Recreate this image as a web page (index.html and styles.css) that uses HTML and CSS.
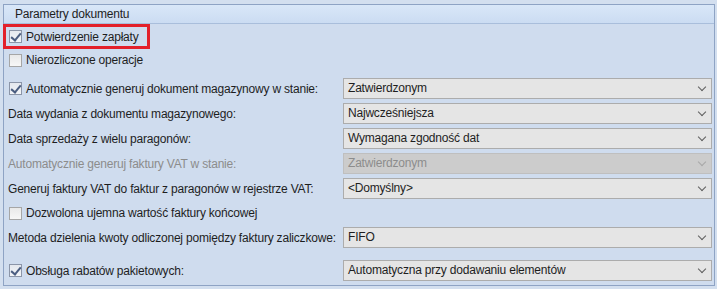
FILE: index.html
```html
<!DOCTYPE html>
<html lang="pl">
<head>
  <meta charset="UTF-8">
  <title>Parametry dokumentu</title>
  <link rel="stylesheet" href="styles.css">
</head>
<body>
  <div class="panel">
    <div class="panel-head">Parametry dokumentu</div>

    <div class="row r-first">
      <span class="chk on"></span><span class="lbl">Potwierdzenie zapłaty</span>
      <span class="mark"></span>
    </div>
    <div class="row r-short">
      <span class="chk"></span><span class="lbl">Nierozliczone operacje</span>
    </div>

    <div class="row r-gap">
      <div class="cell"><span class="chk on"></span><span class="lbl">Automatycznie generuj dokument magazynowy w stanie:</span></div>
      <div class="combo">Zatwierdzonym</div>
    </div>
    <div class="row">
      <div class="cell"><span class="lbl">Data wydania z dokumentu magazynowego:</span></div>
      <div class="combo">Najwcześniejsza</div>
    </div>
    <div class="row">
      <div class="cell"><span class="lbl">Data sprzedaży z wielu paragonów:</span></div>
      <div class="combo">Wymagana zgodność dat</div>
    </div>
    <div class="row off">
      <div class="cell"><span class="lbl">Automatycznie generuj faktury VAT w stanie:</span></div>
      <div class="combo">Zatwierdzonym</div>
    </div>
    <div class="row">
      <div class="cell"><span class="lbl">Generuj faktury VAT do faktur z paragonów w rejestrze VAT:</span></div>
      <div class="combo">&lt;Domyślny&gt;</div>
    </div>
    <div class="row r-mid">
      <span class="chk"></span><span class="lbl">Dozwolona ujemna wartość faktury końcowej</span>
    </div>
    <div class="row">
      <div class="cell"><span class="lbl">Metoda dzielenia kwoty odliczonej pomiędzy faktury zaliczkowe:</span></div>
      <div class="combo">FIFO</div>
    </div>
    <div class="row r-last">
      <div class="cell"><span class="chk on"></span><span class="lbl">Obsługa rabatów pakietowych:</span></div>
      <div class="combo">Automatyczna przy dodawaniu elementów</div>
    </div>
  </div>
</body>
</html>
```

FILE: styles.css
```css
:root { --tlo: #cfdcee; --ramka: #8ea3c4; --tekst: #1e1e1e; --szary: #8c8c8c; }
* { box-sizing: border-box; }
body { margin:0; background:#d3dfef; font-family:"Liberation Sans", Arial, sans-serif; font-size:12px;
  letter-spacing:-0.2px; color:var(--tekst); }
.panel { margin:4px 0 0 3px; width:712px; height:282px; background:var(--tlo);
  border:1px solid var(--ramka); }
.panel-head { height:19px; padding-left:11px; line-height:18px; border-bottom:1px solid #a9bedb;
  background:linear-gradient(#d9e7f8, #cbdcf2); }
.row { position:relative; display:flex; align-items:center; height:25px; padding:0 2px 0 4px; }
.r-short { height:22px; }
.r-gap { margin-top:5px; }
.r-mid { height:24px; }
.r-last { margin-top:8px; }
.cell { display:flex; align-items:center; width:335px; flex:none; white-space:nowrap; }
.lbl { white-space:nowrap; }
.chk { width:13px; height:13px; margin:0 4px 0 1px; flex:none; border:1px solid #a6a6a6;
  background:linear-gradient(#e9e9e9, #f7f7f7); position:relative; }
.chk.on { border-color:#8b95a8; background:linear-gradient(#e4e8ee, #f3f5f8); }
.chk.on::after { content:""; position:absolute; left:3px; top:0; width:4px; height:8px;
  border:solid #4a5d80; border-width:0 2px 2px 0; transform:rotate(40deg); }
.combo { flex:1; height:21px; line-height:19px; padding-left:4px; border:1px solid #acacac;
  background:#e5e5e5; position:relative; white-space:nowrap; }
.combo::after { content:""; position:absolute; right:6px; top:5px; width:5px; height:5px;
  border:solid #5e5e5e; border-width:0 1px 1px 0; transform:rotate(45deg); }
.off .lbl { color:var(--szary); }
.off .combo { background:#cccccc; border-color:#bfbfbf; color:var(--szary); }
.off .combo::after { border-color:#a8a8a8; }
.mark { position:absolute; left:-1px; top:0; width:147px; height:25px; border:3px solid #e3202a; }
```
